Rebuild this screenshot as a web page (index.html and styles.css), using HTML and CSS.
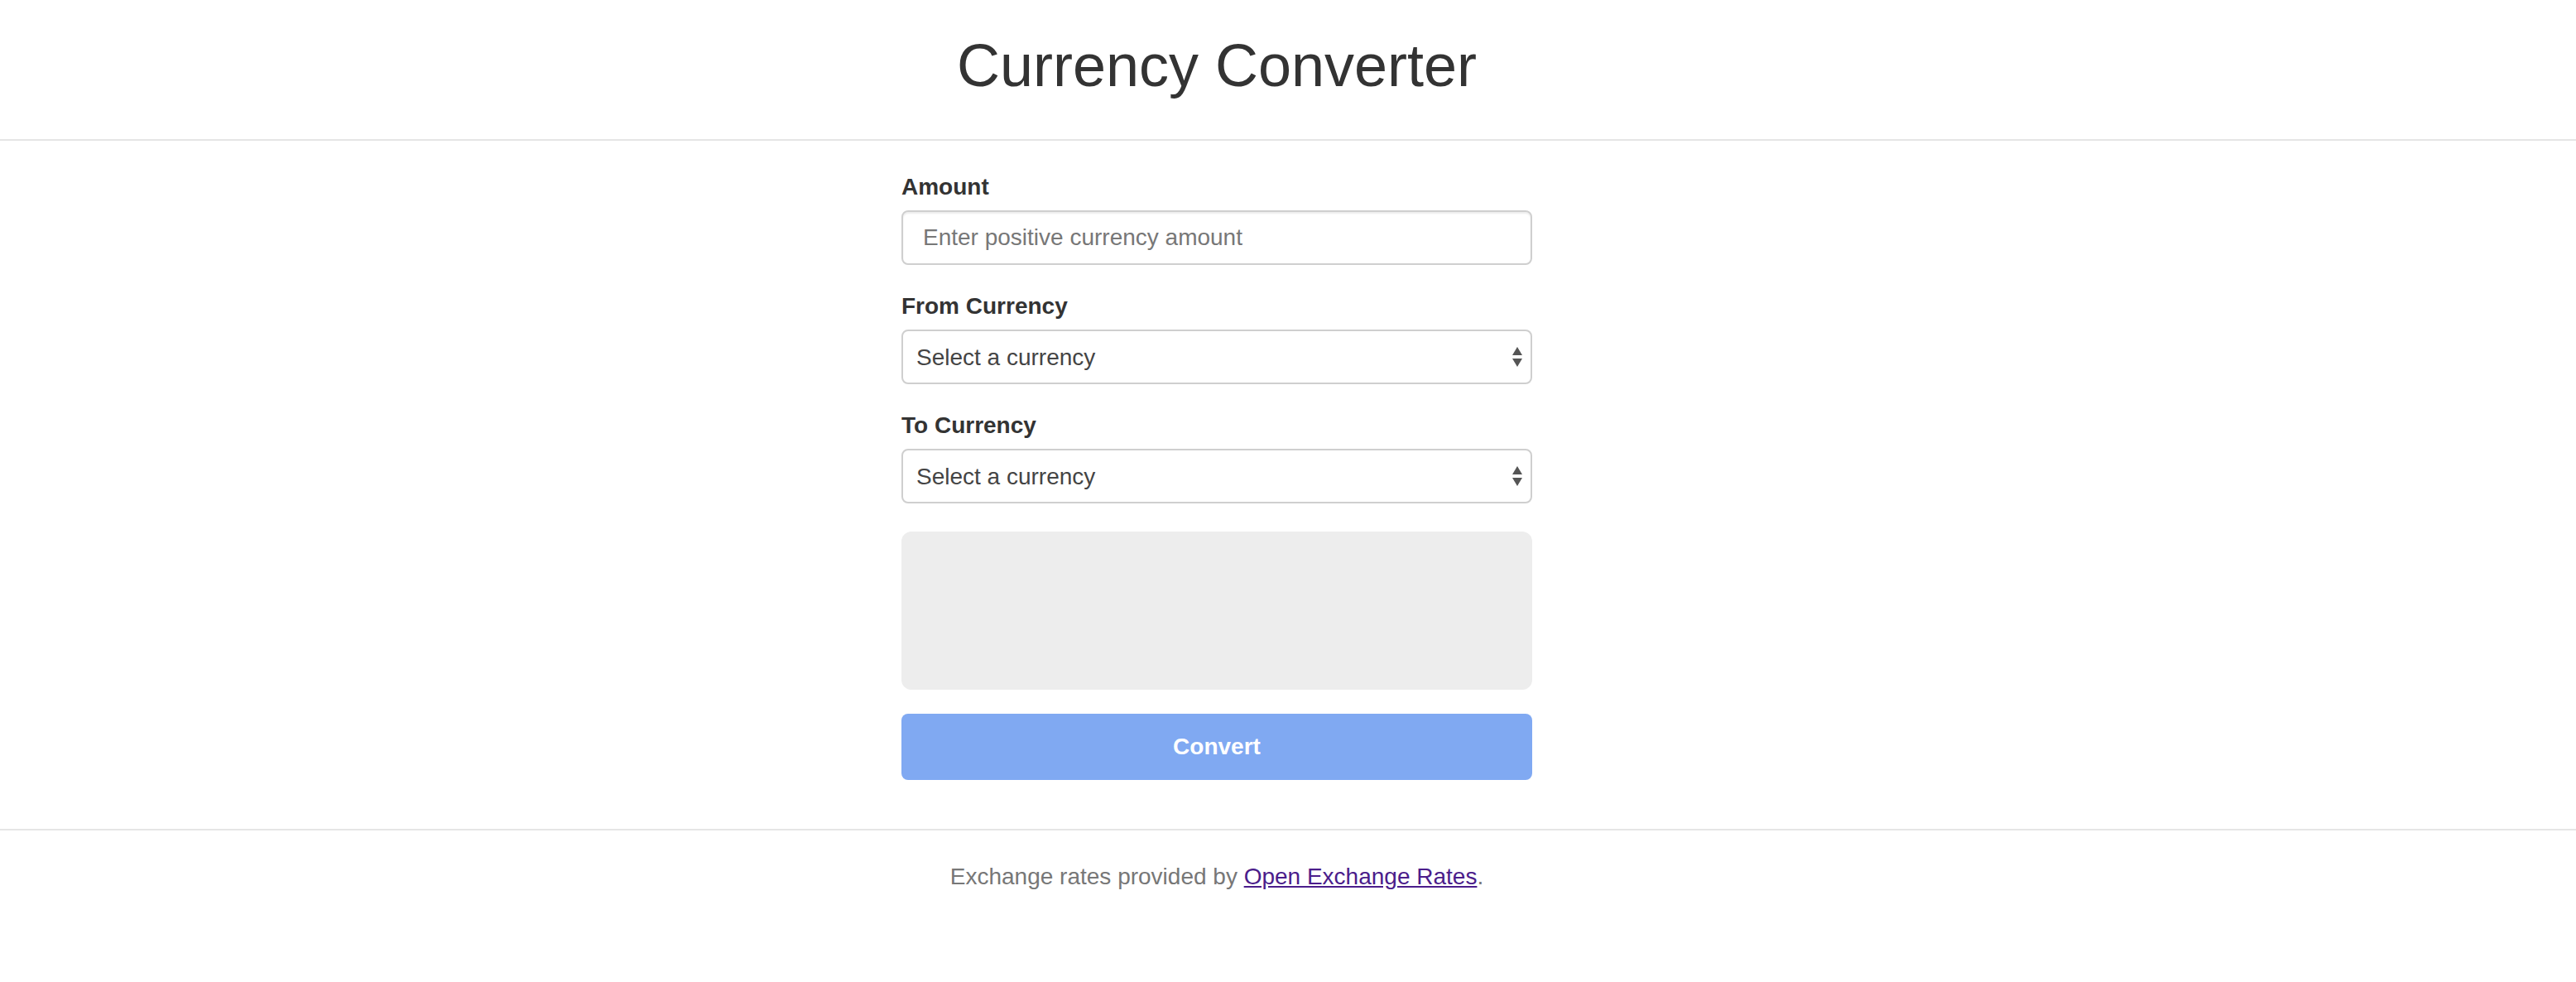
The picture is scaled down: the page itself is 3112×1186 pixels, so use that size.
FILE: index.html
```html
<!DOCTYPE html>
<html lang="en">
<head>
<meta charset="utf-8">
<title>Currency Converter</title>
<link rel="stylesheet" href="styles.css">
</head>
<body>
<header class="site-header">
  <div class="inner">
    <h1 class="title">Currency Converter</h1>
  </div>
</header>
<main class="site-main">
  <form class="inner converter">
    <div class="form-group">
      <label class="field-label" for="amount">Amount</label>
      <input class="field-control" id="amount" type="text" placeholder="Enter positive currency amount">
    </div>
    <div class="form-group">
      <label class="field-label" for="from">From Currency</label>
      <div class="select-wrap">
        <select class="field-control field-select" id="from"><option>Select a currency</option></select>
        <svg class="select-arrows" width="14" height="26" viewBox="0 0 14 26"><path d="M7 1 L13 11 L1 11 Z" fill="#555"/><path d="M1 15 L13 15 L7 25 Z" fill="#555"/></svg>
      </div>
    </div>
    <div class="form-group">
      <label class="field-label" for="to">To Currency</label>
      <div class="select-wrap">
        <select class="field-control field-select" id="to"><option>Select a currency</option></select>
        <svg class="select-arrows" width="14" height="26" viewBox="0 0 14 26"><path d="M7 1 L13 11 L1 11 Z" fill="#555"/><path d="M1 15 L13 15 L7 25 Z" fill="#555"/></svg>
      </div>
    </div>
    <div class="result"></div>
    <button class="convert-btn" type="button">Convert</button>
  </form>
</main>
<footer class="site-footer">
  <p class="inner credits">Exchange rates provided by <a href="#" class="credits-link">Open Exchange Rates</a>.</p>
</footer>
</body>
</html>
```
FILE: styles.css
```css
* { box-sizing: border-box; }
html, body { margin: 0; padding: 0; background: #fff; }
body {
  font-family: "Liberation Sans", Arial, Helvetica, sans-serif;
  font-size: 28px;
  line-height: 40px;
  color: #333;
}
.site-header, .site-main, .site-footer { padding-right: 172px; }
.inner { width: 762px; margin-left: auto; margin-right: auto; }
.site-header {
  padding-top: 40px;
  height: 170px;
  border-bottom: 2px solid #e5e5e5;
}
.title {
  margin: 0;
  text-align: center;
  font-size: 72px;
  font-weight: 400;
  line-height: 79px;
  color: #333;
}
.site-main { padding-top: 36px; padding-bottom: 59px; }
.converter { display: flex; flex-direction: column; }
.form-group { display: flex; flex-direction: column; margin-bottom: 30px; }
.field-label {
  font-weight: 700;
  font-size: 28px;
  line-height: 40px;
  margin-bottom: 8px;
  color: #333;
}
.field-control {
  display: block;
  width: 100%;
  height: 66px;
  margin: 0;
  border: 2px solid #cfcfcf;
  border-radius: 8px;
  background: #fff;
  box-shadow: inset 0 2px 2px rgba(0,0,0,0.075);
  font-family: "Liberation Sans", Arial, Helvetica, sans-serif;
  font-size: 28px;
  color: #555;
  padding: 0 24px;
  outline: none;
}
.field-control::placeholder { color: #777; }
.select-wrap { position: relative; }
.field-select {
  -webkit-appearance: none;
  appearance: none;
  padding: 0 40px 0 16px;
  color: #444;
  box-shadow: none;
}
.select-arrows {
  position: absolute;
  right: 11px;
  top: 20px;
  pointer-events: none;
}
.result {
  height: 191px;
  margin-top: 4px;
  background: #ededed;
  border-radius: 12px;
}
.convert-btn {
  margin-top: 29px;
  height: 80px;
  width: 100%;
  border: 0;
  border-radius: 8px;
  background: #80a9f2;
  color: #fff;
  font-family: "Liberation Sans", Arial, Helvetica, sans-serif;
  font-size: 28px;
  font-weight: 700;
}
.site-footer {
  border-top: 2px solid #e5e5e5;
  padding-top: 36px;
}
.credits {
  margin-top: 0;
  margin-bottom: 0;
  text-align: center;
  color: #777;
  width: auto;
}
.credits-link { color: #4b1d8b; text-decoration: underline; }
```
